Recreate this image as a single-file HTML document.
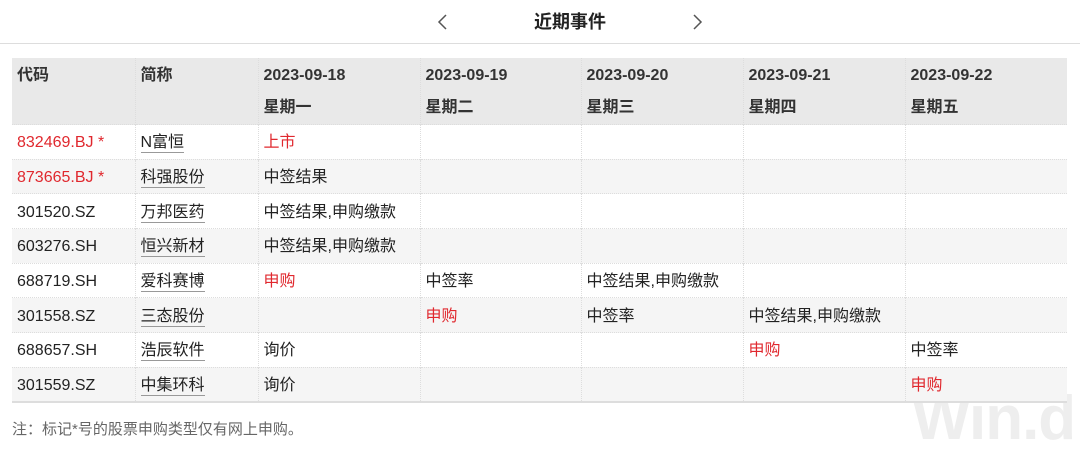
<!DOCTYPE html>
<html><head><meta charset="utf-8"><style>
body{margin:0;width:1080px;height:450px;background:#fff;font-family:"Liberation Sans","Noto Sans CJK SC",sans-serif;position:relative;overflow:hidden;color:#222}
.top{position:absolute;left:0;top:0;width:1080px;height:43px;border-bottom:1px solid #ddd}
.title{position:absolute;left:0;width:1080px;top:10px;text-align:center;font-size:18px;font-weight:bold;padding-left:60px;box-sizing:border-box;line-height:24px}
.arr{position:absolute;top:14px}
table{position:absolute;left:12px;top:58px;border-collapse:collapse;font-size:16px;width:1055px;table-layout:fixed}
td{padding:3px 0 0 5px;height:34.7px;border-left:1px dotted #ddd;vertical-align:middle;box-sizing:border-box;line-height:20px;white-space:nowrap}
td:first-child{border-left:none}
tr.h td{background:#e9e9e9;font-weight:bold;height:66px;vertical-align:top;padding-top:2px;line-height:32px;color:#333}
tr:nth-child(odd):not(.h) td{background:#f5f5f5}
tr{border-bottom:1px dotted #ddd}
tr:last-child{border-bottom:2px solid #ddd}
.r{color:#e0282e}
.n span{border-bottom:1px solid #999;padding-bottom:1px}
.foot{position:absolute;left:12px;top:418px;font-size:15px;color:#666}
.wm{position:absolute;left:912px;top:388px;font-size:62px;line-height:62px;font-weight:bold;color:#eee;letter-spacing:-1px}
</style></head><body>
<div class="top"></div>
<svg class="arr" style="left:437px" width="12" height="16" viewBox="0 0 12 16"><path d="M9 1 L2 8 L9 15" fill="none" stroke="#555" stroke-width="1.5"/></svg>
<div class="title">近期事件</div>
<svg class="arr" style="left:691px" width="12" height="16" viewBox="0 0 12 16"><path d="M3 1 L10 8 L3 15" fill="none" stroke="#555" stroke-width="1.5"/></svg>
<div class="wm">Win.d</div>
<table>
<colgroup><col style="width:123px"><col style="width:123px"><col style="width:162px"><col style="width:161px"><col style="width:162px"><col style="width:162px"><col style="width:162px"></colgroup>
<tr class="h"><td>代码</td><td>简称</td><td>2023-09-18<br>星期一</td><td>2023-09-19<br>星期二</td><td>2023-09-20<br>星期三</td><td>2023-09-21<br>星期四</td><td>2023-09-22<br>星期五</td></tr>
<tr><td class="r">832469.BJ *</td><td class="n"><span>N富恒</span></td><td class="r">上市</td><td></td><td></td><td></td><td></td></tr>
<tr><td class="r">873665.BJ *</td><td class="n"><span>科强股份</span></td><td>中签结果</td><td></td><td></td><td></td><td></td></tr>
<tr><td>301520.SZ</td><td class="n"><span>万邦医药</span></td><td>中签结果,申购缴款</td><td></td><td></td><td></td><td></td></tr>
<tr><td>603276.SH</td><td class="n"><span>恒兴新材</span></td><td>中签结果,申购缴款</td><td></td><td></td><td></td><td></td></tr>
<tr><td>688719.SH</td><td class="n"><span>爱科赛博</span></td><td class="r">申购</td><td>中签率</td><td>中签结果,申购缴款</td><td></td><td></td></tr>
<tr><td>301558.SZ</td><td class="n"><span>三态股份</span></td><td></td><td class="r">申购</td><td>中签率</td><td>中签结果,申购缴款</td><td></td></tr>
<tr><td>688657.SH</td><td class="n"><span>浩辰软件</span></td><td>询价</td><td></td><td></td><td class="r">申购</td><td>中签率</td></tr>
<tr><td>301559.SZ</td><td class="n"><span>中集环科</span></td><td>询价</td><td></td><td></td><td></td><td class="r">申购</td></tr>
</table>
<div class="foot">注：标记*号的股票申购类型仅有网上申购。</div>
</body></html>
